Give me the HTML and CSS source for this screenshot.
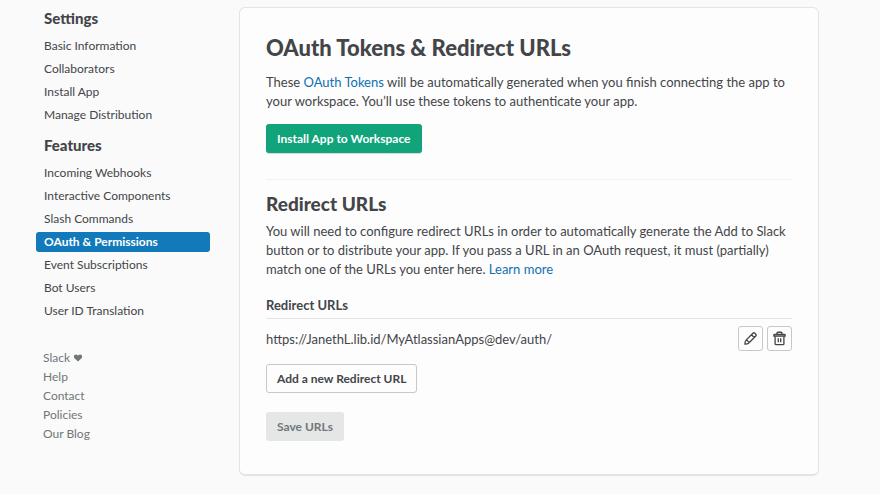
FILE: index.html
```html
<!DOCTYPE html>
<html lang="en">
<head>
<meta charset="utf-8">
<title>OAuth &amp; Permissions</title>
<link rel="stylesheet" href="styles.css">
</head>
<body>
<div class="page">
  <aside class="sidebar">
    <nav class="nav" aria-label="App settings">
      <h2 class="nav-title">Settings</h2>
      <ul class="nav-list">
        <li><a href="#">Basic Information</a></li>
        <li><a href="#">Collaborators</a></li>
        <li><a href="#">Install App</a></li>
        <li><a href="#">Manage Distribution</a></li>
      </ul>
      <h2 class="nav-title">Features</h2>
      <ul class="nav-list">
        <li><a href="#">Incoming Webhooks</a></li>
        <li><a href="#">Interactive Components</a></li>
        <li><a href="#">Slash Commands</a></li>
        <li><a href="#" class="active" aria-current="page">OAuth &amp; Permissions</a></li>
        <li><a href="#">Event Subscriptions</a></li>
        <li><a href="#">Bot Users</a></li>
        <li><a href="#">User ID Translation</a></li>
      </ul>
    </nav>
    <ul class="links">
      <li><a href="#">Slack <svg class="heart" viewBox="0 0 10 9" aria-hidden="true"><path d="M5 8.400 1 4.700C-.9 2.300 1.800-.9 5 1.600 8.200-.9 10.900 2.300 9 4.700Z"/></svg></a></li>
      <li><a href="#">Help</a></li>
      <li><a href="#">Contact</a></li>
      <li><a href="#">Policies</a></li>
      <li><a href="#">Our Blog</a></li>
    </ul>
  </aside>
  <main class="card">
    <section class="tokens">
      <h1>OAuth Tokens &amp; Redirect URLs</h1>
      <p>These <a href="#">OAuth Tokens</a> will be automatically generated when you finish connecting the app to your workspace. You’ll use these tokens to authenticate your app.</p>
      <button type="button" class="btn primary">Install App to Workspace</button>
    </section>
    <section class="redirects">
      <h2>Redirect URLs</h2>
      <p>You will need to configure redirect URLs in order to automatically generate the Add to Slack button or to distribute your app. If you pass a URL in an OAuth request, it must (partially) match one of the URLs you enter here. <a href="#">Learn more</a></p>
      <h3>Redirect URLs</h3>
      <div class="url-row">
        <span class="url">https://JanethL.lib.id/MyAtlassianApps@dev/auth/</span>
        <button type="button" class="icon-btn" aria-label="Edit"><svg viewBox="0 0 16 16" aria-hidden="true"><path d="M2 14q0-3 1.500-4.500L10.600 2.400q1-1 2 0l1 1q1 1 0 2L6.500 12.500Q5 14 2 14ZM9 4l3 3M3.800 9.500l2.700 2.700"/></svg></button>
        <button type="button" class="icon-btn" aria-label="Delete"><svg viewBox="0 0 16 16" aria-hidden="true"><path class="lid" d="M2 5.500V4.300q0-.8.8-.8h10.400q.8 0 .8.800v1.200Z"/><path d="M5.300 3.500V2.300q0-1 1-1h3.400q1 0 1 1v1.200M3.300 5.500v8q0 1 1 1h7.400q1 0 1-1v-8M6.700 7.800v4.200M9.300 7.800v4.200"/></svg></button>
      </div>
      <button type="button" class="btn outline">Add a new Redirect URL</button>
      <button type="button" class="btn save" disabled>Save URLs</button>
    </section>
  </main>
</div>
</body>
</html>
```
FILE: styles.css
```css
* { box-sizing: border-box; }
body {
  margin: 0;
  background: #fafafa;
  color: #434549;
  font: 13px/19px Lato, "Liberation Sans", sans-serif;
}
h1, h2, h3, p, ul { margin: 0; padding: 0; }
ul { list-style: none; }
a { color: #0f70b0; text-decoration: none; }
.page {
  display: grid;
  grid-template-columns: 174px minmax(0, 1fr);
  gap: 29px;
  padding: 7px 61px 19px 36px;
}
.nav-title {
  padding: 2px 8px 8px;
  font-size: 15px;
  line-height: 19px;
  font-weight: 900;
}
.nav-list {
  display: grid;
  gap: 3px;
  margin-bottom: 9px;
  font-size: 12px;
}
.nav-list a {
  display: block;
  padding: 0 8px;
  border-radius: 3px;
  color: inherit;
  line-height: 20px;
}
.nav-list a.active { background: #127abb; color: #fff; font-weight: 700; }
.links { padding: 18px 7px 0; font-size: 12px; }
.links a { color: #717679; }
.heart { width: 10px; height: 8px; fill: currentColor; }
.card {
  padding: 26px;
  border: 1px solid #e3e4e4;
  border-bottom-width: 2px;
  border-radius: 6px;
  background: #fdfdfd;
}
h1 { font-size: 22px; line-height: 28px; font-weight: 900; margin-bottom: 11px; }
.card h2 { font-size: 19px; line-height: 28px; font-weight: 900; margin-bottom: 4px; }
.card h3 {
  font-size: 13px;
  line-height: 19px;
  margin-top: 17px;
  padding-bottom: 3px;
  border-bottom: 1px solid #e3e4e4;
}
.tokens { padding-bottom: 26px; border-bottom: 1px solid #f2f2f2; }
.redirects { padding-top: 10px; }
.btn {
  display: block;
  height: 29px;
  padding: 0 10px;
  border: 1px solid transparent;
  border-radius: 3px;
  font: 700 12px/19px Lato, "Liberation Sans", sans-serif;
}
.primary { margin-top: 13px; background: #11a37a; color: #fff; box-shadow: 0 1px 1px #d8dada; }
.outline { margin-top: 13px; background: #fdfdfd; border-color: #c6c8ca; color: inherit; }
.save { margin: 19px 0 7px; background: #e5e6e6; color: #717679; }
.url-row { display: flex; align-items: center; gap: 4px; padding-top: 7px; }
.url { flex: 1; padding-top: 2px; }
.icon-btn {
  display: grid;
  place-items: center;
  width: 25px;
  height: 25px;
  padding: 0;
  border: 1px solid #c6c8ca;
  border-radius: 3px;
  background: #fdfdfd;
  color: inherit;
}
.icon-btn svg { width: 15px; height: 15px; fill: none; stroke: currentColor; stroke-width: 1.4; stroke-linejoin: round; }
.icon-btn .lid { fill: #a5a7a9; }
```
